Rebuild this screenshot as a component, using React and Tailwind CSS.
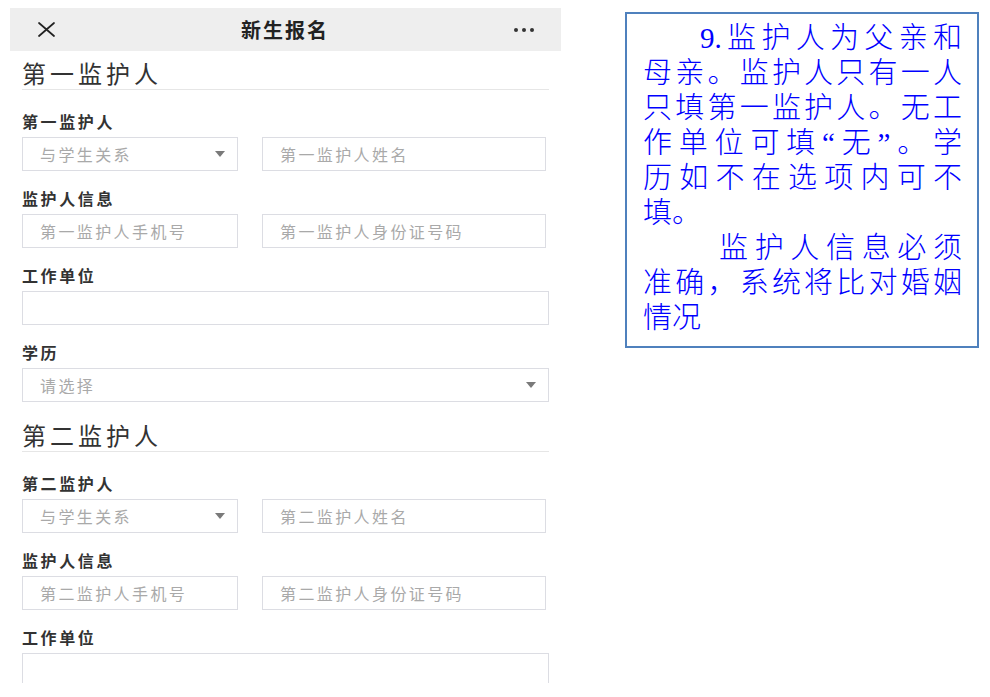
import React from 'react'

const sans = { fontFamily: '"Noto Sans CJK SC", "Noto Sans", sans-serif' }

function Caret() {
  return (
    <svg width="10" height="6" viewBox="0 0 10 6" className="shrink-0">
      <path d="M0 0 H10 L5 6 Z" fill="#7a7a7a" />
    </svg>
  )
}

function Field({ placeholder, select, className }) {
  return (
    <div
      className={`h-[34px] border border-[#dcdde3] bg-white flex items-center justify-between pl-[17px] pr-[12px] text-[16px] tracking-[2.4px] text-[#a9a9a9] ${className}`}
    >
      <span>{placeholder}</span>
      {select && <Caret />}
    </div>
  )
}

function SectionTitle({ children, top }) {
  return (
    <div className={`${top} pb-[2px] border-b border-[#e6e6e6]`}>
      <div className="h-[28px] leading-[28px] text-[24px] tracking-[4px] text-[#333]">{children}</div>
    </div>
  )
}

function Label({ children, top }) {
  return (
    <div className={`${top} mb-[6px] leading-[20px] text-[16px] tracking-[2.6px] font-bold text-[#333]`}>
      {children}
    </div>
  )
}

function Guardian({ n, first }) {
  return (
    <>
      <SectionTitle top={first ? 'pt-[8px]' : 'pt-[19px]'}>{`第${n}监护人`}</SectionTitle>
      <Label top="pt-[21px]">{`第${n}监护人`}</Label>
      <div className="flex gap-[24px]">
        <Field className="w-[216px]" placeholder="与学生关系" select />
        <Field className="w-[284px]" placeholder={`第${n}监护人姓名`} />
      </div>
      <Label top="pt-[17px]">监护人信息</Label>
      <div className="flex gap-[24px]">
        <Field className="w-[216px]" placeholder={`第${n}监护人手机号`} />
        <Field className="w-[284px]" placeholder={`第${n}监护人身份证号码`} />
      </div>
      <Label top="pt-[17px]">工作单位</Label>
      <Field className="w-full" placeholder="" />
      {first && (
        <>
          <Label top="pt-[17px]">学历</Label>
          <Field className="w-full" placeholder="请选择" select />
        </>
      )}
    </>
  )
}

const lines = [
  { t: '9.监护人为父亲和', indent: 'pl-[57px]' },
  { t: '母亲。监护人只有一人' },
  { t: '只填第一监护人。无工' },
  { t: '作单位可填“无”。学' },
  { t: '历如不在选项内可不' },
  { t: '填。', left: true },
  { t: '监护人信息必须', indent: 'pl-[76px]' },
  { t: '准确，系统将比对婚姻' },
  { t: '情况', left: true },
]

export default function App() {
  return (
    <div className="w-[990px] h-[697px] bg-white flex overflow-hidden" style={sans}>
      <div className="ml-[10px] w-[551px] h-[683px] overflow-hidden shrink-0">
        <div className="mt-[8px] h-[43px] bg-[#eeeeee] flex items-center justify-between px-[27px]">
          <svg width="19" height="15" viewBox="0 0 19 15">
            <path d="M2 1 L17 14 M17 1 L2 14" stroke="#222" strokeWidth="1.7" strokeLinecap="round" />
          </svg>
          <span className="text-[20px] font-bold text-[#222] tracking-[2px]">新生报名</span>
          <div className="flex gap-[4px]">
            <span className="w-[4px] h-[4px] rounded-full bg-[#333]" />
            <span className="w-[4px] h-[4px] rounded-full bg-[#333]" />
            <span className="w-[4px] h-[4px] rounded-full bg-[#333]" />
          </div>
        </div>
        <div className="px-[12px]">
          <Guardian n="一" first />
          <Guardian n="二" />
        </div>
      </div>
      <div className="ml-[64px] mt-[12px] w-[354px] h-[336px] border-2 border-[#4f81bd] shrink-0 pl-[16px] pr-[15px] pt-[7px]">
        {lines.map((l, i) => (
          <div
            key={i}
            className={`h-[35px] leading-[35px] text-[29px] text-[#0000ff] font-light whitespace-nowrap ${l.indent || ''} ${
              l.left ? 'text-left' : 'text-justify [text-align-last:justify]'
            }`}
            style={{ fontFamily: '"Liberation Serif", "Noto Sans CJK SC", serif' }}
          >
            {l.t}
          </div>
        ))}
      </div>
    </div>
  )
}
